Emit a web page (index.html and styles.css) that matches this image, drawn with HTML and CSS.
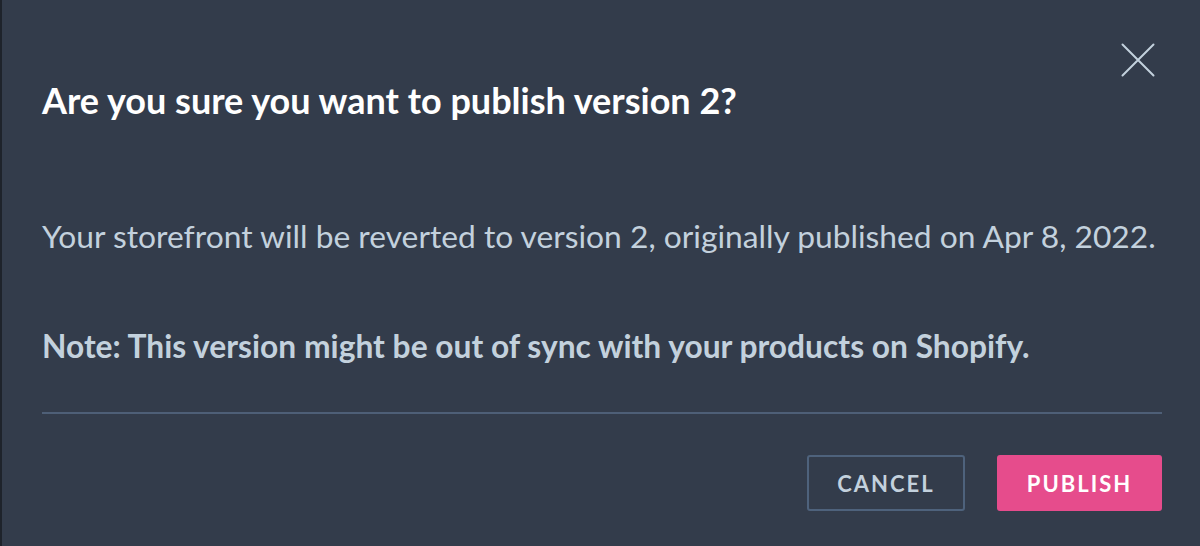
FILE: index.html
```html
<!DOCTYPE html>
<html lang="en">
<head>
<meta charset="utf-8">
<title>Publish version</title>
<link rel="stylesheet" href="styles.css">
</head>
<body>
<div class="dialog">
  <div class="dialog-header">
    <h2 class="dialog-title">Are you sure you want to publish version 2?</h2>
    <button class="close-btn" aria-label="Close">
      <svg width="34" height="34" viewBox="0 0 34 34" fill="none">
        <path d="M1.5 1.5 L32.5 32.5 M32.5 1.5 L1.5 32.5" stroke="#c3d1dd" stroke-width="2" stroke-linecap="round"/>
      </svg>
    </button>
  </div>
  <div class="dialog-body">
    <p class="body-text">Your storefront will be reverted to version 2, originally published on Apr 8, 2022.</p>
    <p class="body-text note">Note: This version might be out of sync with your products on Shopify.</p>
  </div>
  <div class="divider"></div>
  <div class="dialog-footer">
    <button class="btn btn-secondary">CANCEL</button>
    <button class="btn btn-primary">PUBLISH</button>
  </div>
</div>
</body>
</html>
```
FILE: styles.css
```css
* { box-sizing: border-box; }
html, body { margin: 0; padding: 0; }
body {
  width: 1200px;
  height: 546px;
  overflow: hidden;
  background: #333c4b;
  font-family: Lato, "Liberation Sans", sans-serif;
}
.dialog {
  height: 546px;
  background: #333c4b;
  border-left: 2px solid #1e232b;
  padding: 0 38px 0 40px;
  display: flex;
  flex-direction: column;
}
.dialog-header {
  display: flex;
  justify-content: space-between;
  align-items: flex-start;
}
.dialog-title {
  margin: 0;
  padding-top: 78px;
  font-size: 36px;
  font-weight: 700;
  color: #ffffff;
  line-height: 44px;
}
.close-btn {
  margin-top: 43px;
  margin-right: 7px;
  padding: 0;
  border: 0;
  background: none;
  width: 34px;
  height: 34px;
  cursor: pointer;
}
.close-btn svg { display: block; }
.dialog-body {
  padding-top: 94px;
}
.body-text {
  margin: 0;
  font-size: 31.75px;
  line-height: 40px;
  color: #c3d1dd;
  white-space: nowrap;
}
.note {
  margin-top: 70px;
  font-weight: 700;
}
.divider {
  margin-top: 46px;
  height: 2px;
  background: #4e5f77;
}
.dialog-footer {
  margin-top: 41px;
  display: flex;
  justify-content: flex-end;
  gap: 32px;
}
.btn {
  height: 56px;
  border-radius: 3px;
  font-family: Lato, "Liberation Sans", sans-serif;
  font-size: 22px;
  font-weight: 700;
  letter-spacing: 2px;
  cursor: pointer;
}
.btn-secondary {
  width: 158px;
  background: transparent;
  border: 2px solid #4e627c;
  color: #c3d1dd;
}
.btn-primary {
  width: 165px;
  background: #e64c8c;
  border: 0;
  color: #ffffff;
}
```
